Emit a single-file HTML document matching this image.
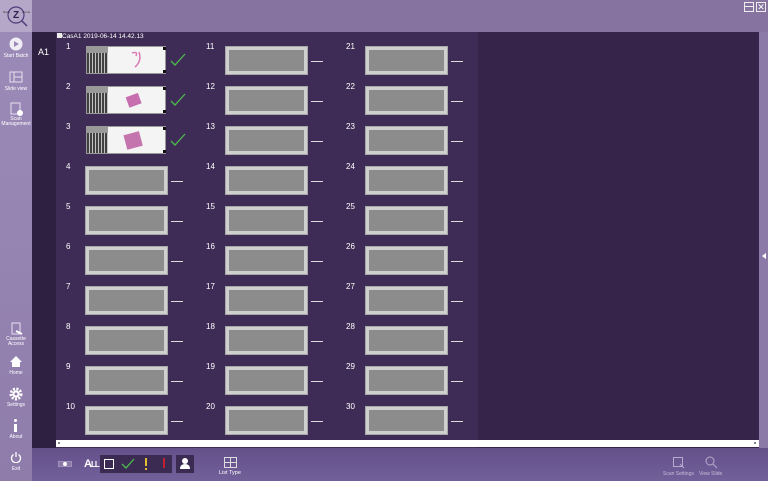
<!DOCTYPE html>
<html><head><meta charset="utf-8"><style>
*{margin:0;padding:0;box-sizing:border-box}
body{width:768px;height:481px;overflow:hidden;background:#8673a0;font-family:"Liberation Sans",sans-serif;position:relative;color:#fff}
.a{position:absolute}
.side{left:0;top:0;width:32px;height:481px;background:linear-gradient(#9c8bb8,#8f7cab)}
.logo{left:0;top:0;width:32px;height:32px;background:#b4a7c8}
.top{left:32px;top:0;width:736px;height:32px;background:#8673a0}
.sl{font-size:5px;color:#fff;text-align:center;width:32px;left:0;line-height:5px}
.lc{left:32px;top:32px;width:24px;height:416px;background:#2e2040}
.main{left:56px;top:32px;width:422px;height:416px;background:#3f2c56}
.right{left:478px;top:32px;width:281px;height:416px;background:#36244a}
.strip{left:759px;top:32px;width:9px;height:416px;background:#8b79a8}
.bot{left:32px;top:448px;width:736px;height:33px;background:linear-gradient(#65508a,#71609a)}
.num{font-size:8px;color:#fff}
.box{width:81px;height:27px;background:#8c8c8c;border:3px solid #cfcfcf;outline:1px solid #a8a8a8}
.dash{width:12px;height:1px;background:#ddd}
</style></head><body>
<div class="a side"></div>
<div class="a logo"><svg width="32" height="32"><circle cx="16" cy="15" r="8" fill="none" stroke="#4a3d7a" stroke-width="1.2"/><line x1="22" y1="21" x2="27" y2="26" stroke="#4a3d7a" stroke-width="1.5"/><text x="13" y="18" font-size="10" font-weight="bold" fill="#2b2250" font-family="Liberation Sans">Z</text><text x="3" y="13" font-size="3" fill="#333">Nano</text><text x="22" y="13" font-size="3" fill="#333">oomer</text></svg></div>
<div class="a top"></div>
<div class="a" style="left:744px;top:2px;width:10px;height:10px;border:1px solid #eee"><div style="margin-top:3px;height:1px;background:#eee"></div></div>
<div class="a" style="left:756px;top:2px;width:10px;height:10px;border:1px solid #eee;font-size:9px;line-height:8px;text-align:center">✕</div>

<!-- sidebar icons -->
<svg class="a" style="left:9px;top:37px" width="14" height="14"><circle cx="7" cy="7" r="6.5" fill="#fff" opacity=".85"/><path d="M5 4 L10 7 L5 10Z" fill="#9c8bb8"/></svg>
<div class="a sl" style="top:54px">Start Batch</div>
<svg class="a" style="left:9px;top:71px" width="14" height="12"><rect x="1" y="1" width="12" height="10" fill="none" stroke="#e8e0f0"/><line x1="5" y1="1" x2="5" y2="11" stroke="#e8e0f0"/><line x1="5" y1="6" x2="13" y2="6" stroke="#e8e0f0"/></svg>
<div class="a sl" style="top:87px">Slide view</div>
<svg class="a" style="left:10px;top:102px" width="14" height="14"><rect x="1" y="1" width="9" height="11" fill="none" stroke="#e8e0f0"/><circle cx="10" cy="11" r="3" fill="#fff"/></svg>
<div class="a sl" style="top:117px">Scan<br>Management</div>
<svg class="a" style="left:10px;top:322px" width="14" height="14"><rect x="2" y="1" width="8" height="11" fill="none" stroke="#e8e0f0"/><path d="M6 9 L12 12" stroke="#fff" stroke-width="2"/></svg>
<div class="a sl" style="top:337px">Cassette<br>Access</div>
<svg class="a" style="left:9px;top:355px" width="14" height="13"><path d="M7 1 L13 7 L11 7 L11 12 L3 12 L3 7 L1 7Z" fill="#fff"/></svg>
<div class="a sl" style="top:371px">Home</div>
<svg class="a" style="left:9px;top:387px" width="14" height="14"><circle cx="7" cy="7" r="5" fill="none" stroke="#fff" stroke-width="3" stroke-dasharray="2 1.4"/><circle cx="7" cy="7" r="3.5" fill="#fff"/><circle cx="7" cy="7" r="1.5" fill="#8f7cab"/></svg>
<div class="a sl" style="top:403px">Settings</div>
<div class="a" style="left:14px;top:419px;width:3px;height:3px;background:#fff;border-radius:2px"></div>
<div class="a" style="left:14px;top:424px;width:3px;height:8px;background:#fff"></div>
<div class="a sl" style="top:435px">About</div>
<svg class="a" style="left:10px;top:451px" width="12" height="12"><path d="M3.5 3.5 A4.5 4.5 0 1 0 8.5 3.5" fill="none" stroke="#fff" stroke-width="1.3"/><line x1="6" y1="1" x2="6" y2="6" stroke="#fff" stroke-width="1.3"/></svg>
<div class="a sl" style="top:467px">Exit</div>

<div class="a lc"></div>
<div class="a main"></div>
<div class="a right"></div>
<div class="a strip"></div>
<div class="a" style="left:762px;top:253px;width:0;height:0;border-top:3px solid transparent;border-bottom:3px solid transparent;border-right:4px solid #fff"></div>
<div class="a" style="left:38px;top:47px;font-size:9px">A1</div>
<div class="a" style="left:57px;top:33px;width:5px;height:5px;background:#eee"></div>
<div class="a" style="left:62px;top:33px;font-size:6.5px">CasA1 2019-06-14 14.42.13</div>
<div class="a" style="left:56px;top:440px;width:703px;height:7px;background:#fff"></div>
<div class="a" style="left:58px;top:442px;width:2px;height:2px;background:#888"></div>
<div class="a" style="left:754px;top:442px;width:2px;height:2px;background:#888"></div>

<div id="grid"></div>
<script>
var h='';
for(var c=0;c<3;c++)for(var r=0;r<10;r++){
 var n=c*10+r+1,x=66+c*140,y=42+r*40,bx=86+c*140,by=47+r*40;
 h+='<div class="a num" style="left:'+x+'px;top:'+y+'px">'+n+'</div>';
 if(n<=3){
  h+='<div class="a" style="left:'+bx+'px;top:'+(by-1)+'px;width:80px;height:28px;background:#f4f4f4;border:1px solid #999"></div>';
  h+='<div class="a" style="left:'+(bx+1)+'px;top:'+by+'px;width:21px;height:26px;background:repeating-linear-gradient(90deg,#222 0 2px,#bbb 2px 3px),#666;opacity:.85"></div>';
  h+='<div class="a" style="left:'+(bx+1)+'px;top:'+by+'px;width:21px;height:6px;background:#999"></div>';
  h+='<div class="a" style="left:'+(bx+77)+'px;top:'+by+'px;width:3px;height:3px;background:#111"></div>';
  h+='<div class="a" style="left:'+(bx+77)+'px;top:'+(by+23)+'px;width:3px;height:3px;background:#111"></div>';
  var sh=n==1?'<path d="M46 6 Q52 4 50 9 M53 5 Q56 14 49 20" stroke="#d77ab5" stroke-width="1.5" fill="none"/>':n==2?'<rect x="41" y="8" width="13" height="11" transform="rotate(-20 47 13)" fill="#c76fae"/>':'<rect x="39" y="6" width="16" height="15" transform="rotate(-15 47 13)" fill="#c575ae"/>';
  h+='<svg class="a" style="left:'+bx+'px;top:'+by+'px" width="80" height="27">'+sh+'</svg>';
  h+='<svg class="a" style="left:'+(bx+84)+'px;top:'+(by+6)+'px" width="16" height="14"><path d="M1 8 L5 12 L15 1" stroke="#4dbb4d" stroke-width="1.3" fill="none"/></svg>';
 } else {
  h+='<div class="a box" style="left:'+bx+'px;top:'+by+'px"></div>';
  h+='<div class="a dash" style="left:'+(bx+85)+'px;top:'+(by+14)+'px"></div>';
 }
}
document.getElementById('grid').innerHTML=h;
</script>

<div class="a bot"></div>
<div class="a" style="left:58px;top:461px;width:14px;height:6px;background:#8a78a8;border:1px solid #a090bb"></div>
<div class="a" style="left:63px;top:462px;width:4px;height:4px;background:#fff;border-radius:2px"></div>
<div class="a" style="left:84px;top:458px;font-size:11px;font-weight:bold;letter-spacing:-1px">A<span style="font-size:8px">LL</span></div>
<div class="a" style="left:100px;top:455px;width:72px;height:18px;background:#3b2a52"></div>
<div class="a" style="left:104px;top:459px;width:10px;height:10px;border:1px solid #fff"></div>
<svg class="a" style="left:121px;top:457px" width="14" height="13"><path d="M1 7 L5 11 L13 2" stroke="#4dbb4d" stroke-width="1.3" fill="none"/></svg>
<div class="a" style="left:145px;top:458px;width:1.5px;height:8px;background:#e0c030"></div>
<div class="a" style="left:145px;top:468px;width:1.5px;height:2px;background:#e0c030"></div>
<div class="a" style="left:163px;top:458px;width:1.5px;height:10px;background:#c02030"></div>
<div class="a" style="left:176px;top:455px;width:18px;height:18px;background:#3b2a52"></div>
<svg class="a" style="left:179px;top:457px" width="12" height="13"><circle cx="6" cy="4" r="3" fill="#fff"/><path d="M1 12 Q1 7 6 7 Q11 7 11 12Z" fill="#fff"/></svg>
<svg class="a" style="left:224px;top:457px" width="13" height="11"><rect x=".5" y=".5" width="12" height="10" fill="none" stroke="#ddd"/><line x1="6.5" y1="0" x2="6.5" y2="11" stroke="#ddd"/><line x1="0" y1="5.5" x2="13" y2="5.5" stroke="#ddd"/></svg>
<div class="a" style="left:219px;top:470px;font-size:5.5px">List Type</div>
<svg class="a" style="left:673px;top:457px" width="12" height="12"><rect x=".5" y=".5" width="9" height="9" fill="none" stroke="#b8aacc"/><path d="M7 7 L11 11" stroke="#b8aacc"/></svg>
<div class="a" style="left:663px;top:471px;font-size:5px;color:#c8bcd8">Scan Settings</div>
<svg class="a" style="left:705px;top:456px" width="13" height="13"><circle cx="5" cy="5" r="4" fill="none" stroke="#b8aacc"/><path d="M8 8 L12 12" stroke="#b8aacc"/></svg>
<div class="a" style="left:699px;top:471px;font-size:5px;color:#c8bcd8">View Slide</div>
</body></html>
